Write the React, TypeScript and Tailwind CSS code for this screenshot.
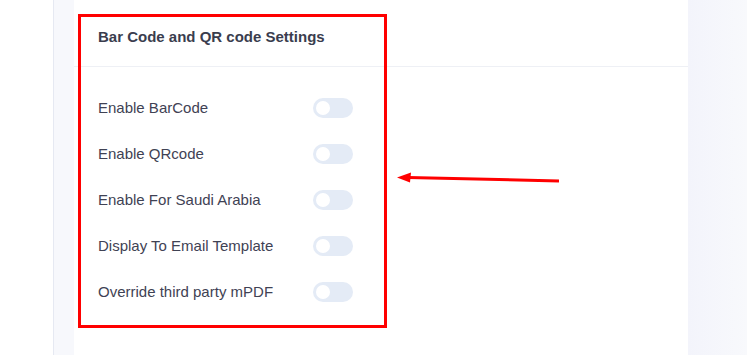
import { useState } from "react"

const options = [
  "Enable BarCode",
  "Enable QRcode",
  "Enable For Saudi Arabia",
  "Display To Email Template",
  "Override third party mPDF",
]

function Toggle() {
  const [on, setOn] = useState(false)
  return (
    <button
      onClick={() => setOn(!on)}
      className={`relative h-[20px] w-[40px] rounded-full ${on ? "bg-[#3699ff]" : "bg-[#e4ebf6]"}`}
    >
      <span
        className={`absolute top-[3px] h-[14px] w-[14px] rounded-full bg-white ${on ? "left-[23px]" : "left-[3px]"}`}
      />
    </button>
  )
}

export default function App() {
  return (
    <div
      className="relative flex h-[355px] w-[747px] overflow-hidden bg-white text-[#3f4254]"
      style={{ fontFamily: '"Liberation Sans", Arial, sans-serif' }}
    >
      <div className="w-[53px] bg-white" />
      <div className="w-[21px] border-l border-[#e6e9f2] bg-[#f7f8fc]" />

      {/* Card */}
      <div className="w-[614px] bg-white">
        <div className="flex h-[67px] items-center border-b border-[#eef0f5] px-6 pt-2">
          <h3 className="text-[15px] font-bold text-[#3a3d4e]">Bar Code and QR code Settings</h3>
        </div>
        <div className="px-6 pt-[18px]">
          {options.map((label) => (
            <div key={label} className="flex h-[46px] items-center">
              <span className="w-[215px] text-[15px]">{label}</span>
              <Toggle />
            </div>
          ))}
        </div>
      </div>

      <div className="flex-1 bg-gradient-to-r from-[#f3f4fb] to-[#f8f9fc]" />

      {/* Annotation */}
      <div className="pointer-events-none absolute left-[78px] top-[14px] h-[314px] w-[309px] border-[3px] border-[#ff0000]" />
      <svg className="pointer-events-none absolute left-0 top-0" width="747" height="355">
        <line x1="559" y1="181" x2="408" y2="177.5" stroke="#ff0000" strokeWidth="3" />
        <polygon points="397,177.5 411,172.5 410,182.5" fill="#ff0000" />
      </svg>
    </div>
  )
}
